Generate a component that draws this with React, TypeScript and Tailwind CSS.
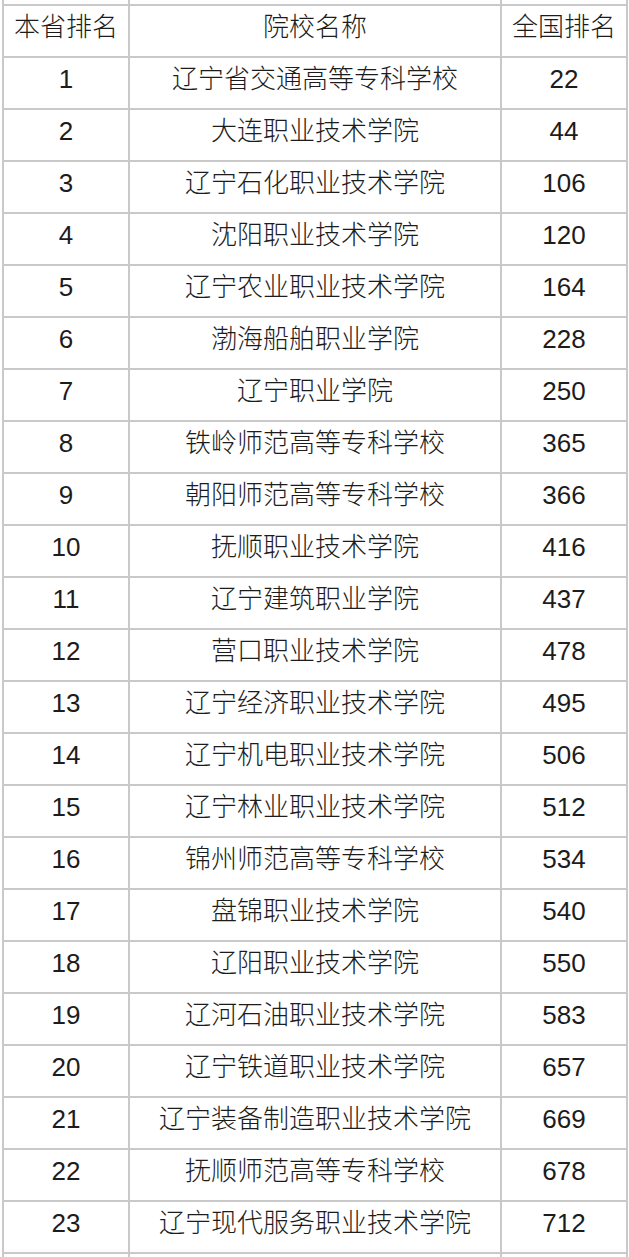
const rows: [number, string, number][] = [
  [1, "辽宁省交通高等专科学校", 22],
  [2, "大连职业技术学院", 44],
  [3, "辽宁石化职业技术学院", 106],
  [4, "沈阳职业技术学院", 120],
  [5, "辽宁农业职业技术学院", 164],
  [6, "渤海船舶职业学院", 228],
  [7, "辽宁职业学院", 250],
  [8, "铁岭师范高等专科学校", 365],
  [9, "朝阳师范高等专科学校", 366],
  [10, "抚顺职业技术学院", 416],
  [11, "辽宁建筑职业学院", 437],
  [12, "营口职业技术学院", 478],
  [13, "辽宁经济职业技术学院", 495],
  [14, "辽宁机电职业技术学院", 506],
  [15, "辽宁林业职业技术学院", 512],
  [16, "锦州师范高等专科学校", 534],
  [17, "盘锦职业技术学院", 540],
  [18, "辽阳职业技术学院", 550],
  [19, "辽河石油职业技术学院", 583],
  [20, "辽宁铁道职业技术学院", 657],
  [21, "辽宁装备制造职业技术学院", 669],
  [22, "抚顺师范高等专科学校", 678],
  [23, "辽宁现代服务职业技术学院", 712],
]

const cell =
  "flex items-center justify-center pb-[7px] border-r-2 border-b-2 border-[#c9c9c9] text-[26px] font-light text-[#1c1c1c]"

function Row({ a, b, c }: { a: React.ReactNode; b: React.ReactNode; c: React.ReactNode }) {
  return (
    <div className="flex h-[52px]">
      <div className={`${cell} w-[126px]`}>{a}</div>
      <div className={`${cell} w-[372px]`}>{b}</div>
      <div className={`${cell} w-[126px]`}>{c}</div>
    </div>
  )
}

export default function App() {
  return (
    <div
      className="w-[629px] h-[1257px] overflow-hidden bg-white"
      style={{ fontFamily: '"Liberation Sans", "Noto Sans CJK SC", sans-serif' }}
    >
      <div className="ml-[2px] border-l-2 border-[#c9c9c9] w-[626px]">
        {/* cut-off row above the header */}
        <div className="flex h-[6px]">
          <div className="w-[126px] border-r-2 border-b-2 border-[#c9c9c9]" />
          <div className="w-[372px] border-r-2 border-b-2 border-[#c9c9c9]" />
          <div className="w-[126px] border-r-2 border-b-2 border-[#c9c9c9]" />
        </div>
        <Row a="本省排名" b="院校名称" c="全国排名" />
        {rows.map(([rank, name, national]) => (
          <Row key={rank} a={rank} b={name} c={national} />
        ))}
        <div className="flex h-[20px]">
          <div className="w-[126px] border-r-2 border-[#c9c9c9]" />
          <div className="w-[372px] border-r-2 border-[#c9c9c9]" />
          <div className="w-[126px] border-r-2 border-[#c9c9c9]" />
        </div>
      </div>
    </div>
  )
}
